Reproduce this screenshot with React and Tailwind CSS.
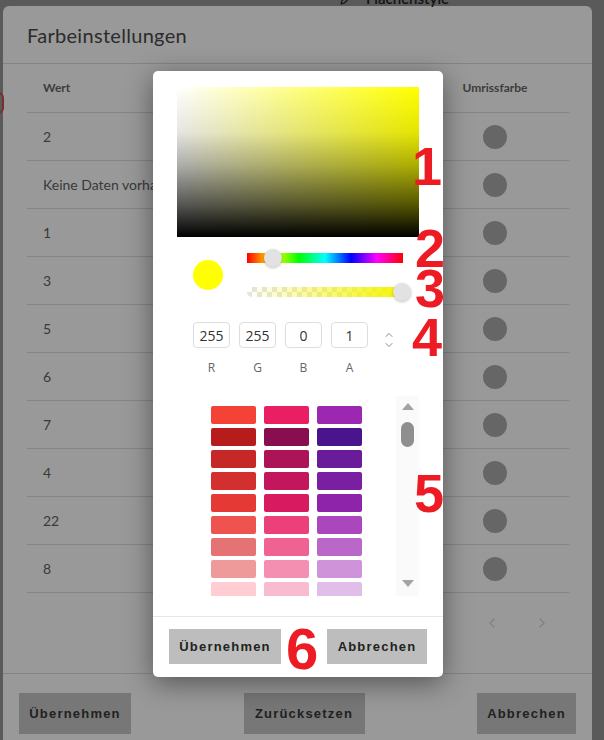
import { ChevronLeft, ChevronRight, ChevronUp, ChevronDown, Pencil } from 'lucide-react';

const rows = ['2', 'Keine Daten vorhanden', '1', '3', '5', '6', '7', '4', '22', '8'];

const swatches = [
    ['#f44336', '#e91e63', '#9c27b0'],
    ['#b71c1c', '#880e4f', '#4a148c'],
    ['#c62828', '#ad1457', '#6a1b9a'],
    ['#d32f2f', '#c2185b', '#7b1fa2'],
    ['#e53935', '#d81b60', '#8e24aa'],
    ['#ef5350', '#ec407a', '#ab47bc'],
    ['#e57373', '#f06292', '#ba68c8'],
    ['#ef9a9a', '#f48fb1', '#ce93d8'],
    ['#ffcdd2', '#f8bbd0', '#e1bee7'],
];

const channels = [
    { label: 'R', value: '255' },
    { label: 'G', value: '255' },
    { label: 'B', value: '0' },
    { label: 'A', value: '1' },
];

const ColorPicker = () => (
    <div className="absolute left-[153px] top-[71px] w-[290px] bg-white rounded-[5px] shadow-[0_6px_28px_rgba(0,0,0,0.45)] font-['Open_Sans',sans-serif]">
        {/* saturation / value area */}
        <div className="ml-[24px] mt-[16px] w-[242px] h-[150px] bg-[#ffff00] relative overflow-hidden">
            <div className="absolute inset-0 bg-gradient-to-r from-white to-transparent"></div>
            <div className="absolute inset-0 bg-[linear-gradient(to_bottom,rgba(0,0,0,0)_0%,rgba(0,0,0,0.1)_30%,rgba(0,0,0,0.32)_52%,rgba(0,0,0,0.66)_78%,#000_100%)]"></div>
        </div>

        {/* preview + sliders */}
        <div className="mt-[16px] flex items-center pl-[40px]">
            <div className="w-[30px] h-[30px] rounded-full bg-[#ffff00]"></div>
            <div className="ml-[24px] flex flex-col gap-[24px]">
                <div className="relative w-[156px] h-[10px] bg-[linear-gradient(to_right,#ff0000,#ffff00,#00ff00,#00ffff,#0000ff,#ff00ff,#ff0000)]">
                    <div className="absolute left-[17px] top-[-4px] w-[18px] h-[18px] rounded-full bg-[#e2e2e2] shadow-[0_1px_3px_rgba(0,0,0,0.25)]"></div>
                </div>
                <div className="relative w-[156px] h-[10px]">
                    <div className="absolute inset-0 rounded-l-full bg-[repeating-conic-gradient(#e4e4e4_0%_25%,#ffffff_0%_50%)] bg-[length:10px_10px]"></div>
                    <div className="absolute inset-0 rounded-l-full bg-gradient-to-r from-[rgba(255,255,0,0)] to-[#f5f500]"></div>
                    <div className="absolute right-[-8px] top-[-4px] w-[18px] h-[18px] rounded-full bg-[#e2e2e2] shadow-[0_1px_3px_rgba(0,0,0,0.25)]"></div>
                </div>
            </div>
        </div>

        {/* rgba inputs */}
        <div className="mt-[25px] pl-[40px] flex items-start">
            <div className="flex gap-[9px]">
                {channels.map(c => (
                    <div key={c.label} className="flex flex-col items-center">
                        <div className="w-[37px] h-[26px] border border-[#dedede] rounded-[4px] flex items-center justify-center text-[14px] text-[#333]">
                            {c.value}
                        </div>
                        <span className="mt-[14px] text-[12px] text-[#666] leading-none">{c.label}</span>
                    </div>
                ))}
            </div>
            <div className="ml-[15px] mt-[7px] flex flex-col items-center text-[#666]">
                <ChevronUp className="w-[12px] h-[12px]" strokeWidth={1.5} />
                <ChevronDown className="w-[12px] h-[12px] -mt-[2px]" strokeWidth={1.5} />
            </div>
        </div>

        {/* swatches + scrollbar */}
        <div className="mt-[22px] h-[200px] flex">
            <div className="ml-[58px] h-full overflow-hidden pt-[10px]">
                <div className="grid grid-cols-3 gap-x-[8px] gap-y-[4px]">
                    {swatches.flat().map((c, i) => (
                        <div key={i} className="w-[45px] h-[18px] rounded-[2px]" style={{ backgroundColor: c }}></div>
                    ))}
                </div>
            </div>
            <div className="ml-[34px] w-[23px] h-full bg-[#fafafa] flex flex-col items-center">
                <div className="mt-[7px] w-0 h-0 border-l-[6px] border-r-[6px] border-b-[7px] border-l-transparent border-r-transparent border-b-[#a3a3a3]"></div>
                <div className="mt-[12px] w-[13px] h-[25px] rounded-full bg-[#8f8f8f]"></div>
                <div className="mt-auto mb-[9px] w-0 h-0 border-l-[6px] border-r-[6px] border-t-[7px] border-l-transparent border-r-transparent border-t-[#a3a3a3]"></div>
            </div>
        </div>

        {/* footer */}
        <div className="mt-[20px] border-t border-[#e4e6ea] px-[16px] pt-[12px] pb-[13px] flex justify-between font-['Liberation_Sans',sans-serif]">
            <button className="w-[112px] h-[35px] bg-[#bdbdbd] text-[13px] font-bold tracking-[1.2px] text-[#222]">Übernehmen</button>
            <button className="w-[100px] h-[35px] bg-[#bdbdbd] text-[13px] font-bold tracking-[1.2px] text-[#222]">Abbrechen</button>
        </div>
    </div>
);

const Marker = ({ n, className }) => (
    <span className={`absolute font-['Liberation_Sans',sans-serif] font-bold text-[54px] leading-none text-[#ed1c24] ${className}`}>{n}</span>
);

export default function App() {
    return (
        <div className="relative w-[604px] h-[740px] overflow-hidden bg-[#969696] font-['Lato',sans-serif]">
            {/* app behind the dialog */}
            <div className="absolute left-[340px] top-[-13px] flex items-center gap-[12px] text-[#222] text-[15px] font-semibold">
                <Pencil className="w-[14px] h-[14px]" />
                <span>Flächenstyle</span>
            </div>
            <div className="absolute left-[-8px] top-[92px] w-[12px] h-[22px] border-2 border-[#d04848] rounded-full"></div>

            {/* settings dialog */}
            <div className="ml-[3px] mt-[6px] w-[589px] h-[760px] bg-white rounded-t-[6px] flex flex-col">
                <div className="h-[58px] border-b border-[#dcdcdc] pl-[24px] flex items-center">
                    <h2 className="text-[20px] text-[#4a4a4a] tracking-[0.3px]">Farbeinstellungen</h2>
                </div>

                <div className="mx-[24px] w-[542px]">
                    <div className="h-[49px] border-b border-[#dedede] flex items-center text-[12px] font-bold text-[#666]">
                        <span className="pl-[16px] flex-1">Wert</span>
                        <span className="w-[84px] text-center mr-[32px]">Umrissfarbe</span>
                    </div>
                    {rows.map((r, i) => (
                        <div key={i} className="h-[48px] border-b border-[#dedede] flex items-center text-[14px] text-[#5f5f5f]">
                            <span className="pl-[16px] flex-1">{r}</span>
                            <div className="w-[84px] mr-[32px] flex justify-center">
                                <div className="w-[24px] h-[24px] rounded-full bg-[#ababab]"></div>
                            </div>
                        </div>
                    ))}
                    <div className="h-[80px] flex justify-end items-start pt-[22px] pr-[19px] gap-[34px] text-[#d8d8d8]">
                        <ChevronLeft className="w-[16px] h-[16px]" />
                        <ChevronRight className="w-[16px] h-[16px]" />
                    </div>
                </div>

                <div className="border-t border-[#dcdcdc] px-[16px] pt-[19px] flex justify-between font-['Liberation_Sans',sans-serif]">
                    <button className="w-[112px] h-[41px] bg-[#c6c6c6] text-[13px] font-bold tracking-[1.2px] text-[#383838]">Übernehmen</button>
                    <button className="w-[121px] h-[41px] bg-[#c6c6c6] text-[13px] font-bold tracking-[1.2px] text-[#383838]">Zurücksetzen</button>
                    <button className="w-[99px] h-[41px] bg-[#c6c6c6] text-[13px] font-bold tracking-[1.2px] text-[#383838]">Abbrechen</button>
                </div>
            </div>

            {/* modal backdrop */}
            <div className="absolute inset-0 bg-black/40"></div>

            <ColorPicker />

            <Marker n="1" className="left-[412px] top-[139px]" />
            <Marker n="2" className="left-[415px] top-[221px]" />
            <Marker n="3" className="left-[415px] top-[261px]" />
            <Marker n="4" className="left-[412px] top-[310px]" />
            <Marker n="5" className="left-[414px] top-[466px] text-[48px]" />
            <Marker n="6" className="left-[286px] top-[620px] text-[58px]" />
        </div>
    );
}
